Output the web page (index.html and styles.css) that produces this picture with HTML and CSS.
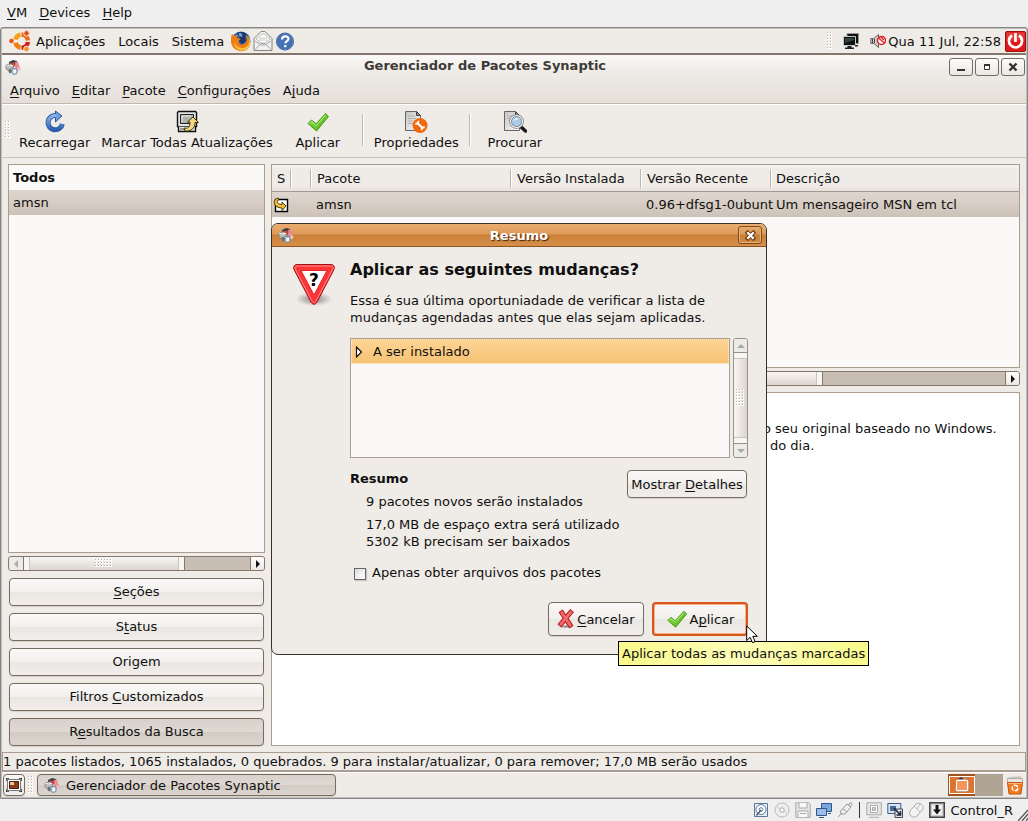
FILE: index.html
```html
<!DOCTYPE html>
<html lang="pt-BR">
<head>
<meta charset="utf-8">
<title>Gerenciador de Pacotes Synaptic</title>
<link rel="stylesheet" href="styles.css">
</head>
<body>
<svg class="defs" aria-hidden="true">
  <defs>
    <linearGradient id="g-blue" x1="0" y1="0" x2="0" y2="1"><stop offset="0" stop-color="#8fb6e8"/><stop offset="1" stop-color="#2a5db0"/></linearGradient>
    <linearGradient id="g-green" x1="0" y1="0" x2="1" y2="1"><stop offset="0" stop-color="#8fe04a"/><stop offset="1" stop-color="#4fb014"/></linearGradient>
    <linearGradient id="g-paper" x1="0" y1="0" x2="1" y2="1"><stop offset="0" stop-color="#c4c4c4"/><stop offset="1" stop-color="#fafafa"/></linearGradient>
    <radialGradient id="g-shadow"><stop offset="0" stop-color="#555" stop-opacity=".7"/><stop offset="1" stop-color="#555" stop-opacity="0"/></radialGradient>
    <pattern id="p-dots" width="3" height="3" patternUnits="userSpaceOnUse"><path d="M0 0h2v2H0z" fill="#fff"/><path d="M0 0h1v1H0z" fill="#b5aea6"/></pattern>
    <symbol id="i-package" viewBox="0 0 16 16">
      <path d="M4 3l4-2 4 1v4l-4 2-4-2z" fill="#3d3f40"/>
      <path d="M10 3l3-.5 1 4 1.500 3.500-3 2-2.500-4z" fill="#e98b93"/>
      <path d="M12 8l3 1 .5 2-2.500 1.500z" fill="#f6c3c8"/>
      <path d="M1 6l5-1.500L8.500 6v5L4 12 1 10z" fill="#b9b9b7" stroke="#77797a" stroke-width=".7"/>
      <path d="M1 6l3.500 1 4-1" fill="none" stroke="#f2f2f2"/>
      <path d="M6 5l2-1.500 3 1-1.500 2.500z" fill="#d9403e"/>
      <path d="M4 10h2l1 3-2 1.500-1.500-1.500z" fill="#6c7178"/>
      <path d="M7 9.500h5v5l-3 1-2-1z" fill="#c4d3e0" stroke="#68809a" stroke-width=".8"/>
      <path d="M8.500 11h2.500v3H8.500z" fill="#f6fafc"/>
    </symbol>
    <symbol id="i-check" viewBox="0 0 24 24">
      <path d="M2 13.500l3.500-3.500 4.500 4L19.500 3.500l3 3L10.500 21z" fill="url(#g-green)" stroke="#4a9a18" stroke-linejoin="round"/>
      <path d="M4 13.200l1.700-1.500 4.400 4L19.600 5" fill="none" stroke="#b8f088"/>
    </symbol>
  </defs>
</svg>

<nav class="host-menu">
  <button><u>V</u>M</button><button><u>D</u>evices</button><button><u>H</u>elp</button>
</nav>

<div class="guest">
  <header class="panel">
    <svg class="ubuntu" viewBox="0 0 22 22"><g fill="none" stroke-width="4.500"><path d="M6.500 9.500A6.500 6.500 0 0 1 11.500 4.800" stroke="#f7a21b"/><path d="M12.500 4.600A6.800 6.800 0 0 1 19 10.500" stroke="#ee6a12"/><path d="M19 12A6.800 6.800 0 0 1 12.500 17.800" stroke="#d32016"/><path d="M11.500 17.700A6.500 6.500 0 0 1 6.500 12.800" stroke="#f08014"/></g><circle cx="2.500" cy="11" r="2.300" fill="#ee5512"/><circle cx="17.500" cy="3.300" r="2.800" fill="#e8500f" stroke="#efebe7"/><circle cx="17.500" cy="19" r="2.800" fill="#f5931c" stroke="#efebe7"/></svg>
    <button>Aplicações</button><button>Locais</button><button>Sistema</button>
    <span class="launchers">
      <svg viewBox="0 0 22 22" width="22" height="22"><circle cx="11" cy="11" r="9.500" fill="#2a66ae"/><path d="M7 3c4-2 8-1 10 2l-2 2 1 4-4 3-3-3 1-3z" fill="#1c3565"/><path d="M9 3c3 0 4 2 3 4L9 6z" fill="#6ea6dc"/><path d="M2 4l2 2c1-1 3-1 4-1L6.500 8 11 9c-2 1-3 2-2 4 2 3 6 1 7-1 2-3 0-6-1-7 4 1 6 6 5 10-2 5-6 7-10 6-6-1-9-5-9-10 0-3 0-5 1-7z" fill="#ef7d12"/><path d="M18 6c3 6 0 12-6 12-4 0-7-3-8-6 0 6 5 8.500 8 8.500 6 0 11-7 6-14.500z" fill="#f9c43c"/></svg>
      <svg viewBox="0 0 22 22" width="22" height="22"><path d="M2 8.500L9 1.500h4l7 7V20.500H2z" fill="#f1f1ef" stroke="#858585"/><path d="M4 9l6-5h2l6 5-5 4H9z" fill="#fff" stroke="#bbb"/><path d="M7 8h8M6.500 10h9" stroke="#c8c8c8"/><path d="M3 19.500l6-6h4l6 6M3 11l6 4h4l6-4" fill="none" stroke="#a5a5a5"/></svg>
      <svg viewBox="0 0 22 22" width="22" height="22"><circle cx="11" cy="11.500" r="8.500" fill="#4472b4" stroke="#a9bcd8"/><circle cx="11" cy="11.500" r="8.500" fill="none" stroke="#2e5593" stroke-width=".8"/><path d="M8 9.500c0-4 6.500-4 6.500-.7 0 2.200-3.200 2.400-3.200 4.500M11.300 15v2.300" fill="none" stroke="#fff" stroke-width="2.200"/></svg>
    </span>
    <span class="spacer"></span>
    <svg class="handle" width="6" height="18"><path d="M0 0h6v18H0z" fill="url(#p-dots)"/></svg>
    <svg class="net" viewBox="0 0 16 18" width="16" height="18"><path d="M4 1.500h11.500v10H4z" fill="#111" stroke="#999"/><path d="M.5 4.500h12v9H.5z" fill="#0c1312" stroke="#c8c8c8"/><path d="M2 6h9v2L2 11z" fill="#344240"/><path d="M4.500 14h4v1.500h2.500V17H2v-1.500h2.500zM12 13h3v1.500h-3z" fill="#222"/></svg>
    <svg class="vol" viewBox="0 0 16 16" width="16" height="16"><path d="M.8 5.500h3L8.500 1.500v13L4 10.500H.8z" fill="#ccc" stroke="#666"/><path d="M2.500 6v4M4.500 6v4" stroke="#444"/><circle cx="11.500" cy="7.500" r="4" fill="#fff" stroke="#dc2028" stroke-width="1.500"/><path d="M8.700 5l5.600 5M11 4l3 3" stroke="#dc2028" stroke-width="1.300"/></svg>
    <time>Qua 11 Jul, 22:58</time>
    <svg class="power" viewBox="0 0 21 21" width="21" height="21"><rect x=".5" y=".5" width="20" height="20" rx="1.500" fill="#df191b" stroke="#9b0d0e"/><path d="M1.500 1.500h18v8h-18z" fill="#ee5c58" opacity=".5"/><path d="M7 4.500a6.500 6.500 0 1 0 7 0" fill="none" stroke="#fff" stroke-width="2.700"/><path d="M10.500 2v9" stroke="#fff" stroke-width="2.700"/></svg>
  </header>

  <main class="window">
    <div class="window-head">
      <div class="titlebar">
        <svg width="16" height="16"><use href="#i-package"/></svg>
        <h1>Gerenciador de Pacotes Synaptic</h1>
        <button aria-label="Minimizar"><svg viewBox="0 0 10 10"><path d="M1 8h8" stroke="#333" stroke-width="2"/></svg></button>
        <button aria-label="Maximizar"><svg viewBox="0 0 10 10"><path d="M2.500 3v4.500h5V3" fill="#fff" stroke="#333"/><path d="M2 3h6" stroke="#333" stroke-width="2"/></svg></button>
        <button aria-label="Fechar"><svg viewBox="0 0 10 10"><path d="M1.500 1.500l7 7M8.500 1.500l-7 7" stroke="#333" stroke-width="2.400"/></svg></button>
      </div>
      <nav class="menubar">
        <button><u>A</u>rquivo</button><button><u>E</u>ditar</button><button><u>P</u>acote</button><button><u>C</u>onfigurações</button><button>A<u>j</u>uda</button>
      </nav>
    </div>

    <div class="toolbar">
      <svg class="handle" width="6" height="18"><path d="M0 0h6v18H0z" fill="url(#p-dots)"/></svg>
      <button>
        <svg viewBox="0 0 24 24"><path d="M19.300 14A7.200 7.200 0 1 1 13 5.500" fill="none" stroke="#2b58a2" stroke-width="5"/><path d="M12.500 1l6.500 5-6.500 6z" fill="#6f9edc" stroke="#2b58a2"/><path d="M19.300 14A7.200 7.200 0 1 1 13 5.700" fill="none" stroke="url(#g-blue)" stroke-width="3.200"/></svg>
        Recarregar</button>
      <button>
        <svg viewBox="0 0 24 24"><path d="M2.500 2.500l1-1h17l1 1v14h-1v5h-17v-5h-1z" fill="#e4e4e2" stroke="#111" stroke-width="1.400"/><path d="M5.500 4.500h13v9h-13z" fill="#aeb1ae" stroke="#222"/><path d="M7 12V6h9" stroke="#eee" fill="none"/><path d="M3 16.500h12M5 19h9" stroke="#555"/><path d="M9 18c4 1 6-1 6-6h-2.500L18 7l5.500 5.500H20c0 6-4 9-10 8.500z" fill="#f5d77d" stroke="#3e3110"/></svg>
        Marcar Todas Atualizações</button>
      <button><svg><use href="#i-check"/></svg>Aplicar</button>
      <i class="sep"></i>
      <button>
        <svg viewBox="0 0 24 24"><path d="M1.500 1.500h11l4 4v15h-15z" fill="url(#g-paper)" stroke="#666"/><path d="M12.500 1.500l4 4h-4z" fill="#888" stroke="#444"/><path d="M4 6h7M4 8.500h8M4 11h5M4 13.500h5" stroke="#b2b2b2"/><circle cx="16" cy="15.500" r="7.500" fill="#f06a0c"/><path d="M13 12.500l6 6" stroke="#fff" stroke-width="2.200"/><path d="M11.300 13.700a2.500 2.500 0 0 0 3-3M20.700 17.300a2.500 2.500 0 0 0-3 3" fill="none" stroke="#fff" stroke-width="1.800"/></svg>
        Propriedades</button>
      <i class="sep"></i>
      <button>
        <svg viewBox="0 0 24 24"><path d="M1.500 1.500h11l4 4v15h-15z" fill="url(#g-paper)" stroke="#666"/><path d="M12.500 1.500l4 4h-4z" fill="#888" stroke="#444"/><path d="M4 6h6M4 8.500h3" stroke="#b2b2b2"/><path d="M17.500 16.500l5 4.500" stroke="#1b1b1b" stroke-width="3.500" stroke-linecap="round"/><circle cx="13.500" cy="11.500" r="6" fill="#a9cbe8" stroke="#777" stroke-width="2.600"/><circle cx="13.500" cy="11.500" r="6" fill="none" stroke="#f0f0f0" stroke-width="1.200"/><path d="M10 11c1-3 4-4 6-2z" fill="#dcecf8"/></svg>
        Procurar</button>
    </div>

    <div class="content">
      <aside class="side">
        <ul class="list"><li><b>Todos</b></li><li class="selected">amsn</li></ul>
        <div class="hscroll">
          <button class="off" aria-label="Rolar para a esquerda"><svg viewBox="0 0 6 8"><path d="M5 0v8L1 4z" fill="#aaa"/></svg></button>
          <div class="thumb"><svg width="18" height="9"><path d="M0 0h18v9H0z" fill="url(#p-dots)"/></svg></div>
          <div class="trough"></div>
          <button aria-label="Rolar para a direita"><svg viewBox="0 0 6 8"><path d="M1 0v8l4-4z" fill="#111"/></svg></button>
        </div>
        <div class="filters">
          <button class="btn"><u>S</u>eções</button>
          <button class="btn">S<u>t</u>atus</button>
          <button class="btn">Origem</button>
          <button class="btn">Filtros <u>C</u>ustomizados</button>
          <button class="btn pressed">R<u>e</u>sultados da Busca</button>
        </div>
      </aside>

      <section class="main">
        <div class="table-box">
          <table>
            <colgroup><col class="c-s"><col class="c-icon"><col class="c-name"><col class="c-ver"><col class="c-ver"><col></colgroup>
            <thead><tr><th>S</th><th></th><th>Pacote</th><th>Versão Instalada</th><th>Versão Recente</th><th>Descrição</th></tr></thead>
            <tbody><tr>
              <td><svg class="mark" viewBox="0 0 16 16" width="16" height="16"><path d="M2.500 2.500h12v12h-12z" fill="#fff" stroke="#000" stroke-width="1.400"/><path d="M5 1C1 2 0 6 3 9c2 1.500 4 2 6 2v2.500l4-4.500-4-4v2.500C6 7.500 4 6 4.500 4L6 2z" fill="#f0bb32" stroke="#4b3705"/></svg></td>
              <td></td><td>amsn</td><td></td><td>0.96+dfsg1-0ubunt</td><td>Um mensageiro MSN em tcl</td>
            </tr></tbody>
          </table>
        </div>
        <div class="hscroll">
          <div class="thumb wide"></div>
          <div class="trough"></div>
          <button aria-label="Rolar para a direita"><svg viewBox="0 0 6 8"><path d="M1 0v8l4-4z" fill="#111"/></svg></button>
        </div>
        <div class="description"><p>o seu original baseado no Windows.</p><p class="second">do dia.</p></div>
      </section>
    </div>
    <footer class="status">1 pacotes listados, 1065 instalados, 0 quebrados. 9 para instalar/atualizar, 0 para remover; 17,0 MB serão usados</footer>
  </main>

  <footer class="taskbar">
    <button class="btn desktop" aria-label="Mostrar a área de trabalho"><svg viewBox="0 0 16 14" width="16" height="14"><path d="M1.500 1.500h13v11h-13z" fill="#fff" stroke="#777"/><path d="M3.500 3.500h9v7h-9z" fill="#8a3d12" stroke="#402010"/><path d="M4 4h4v3H4z" fill="#f5c09a"/><path d="M0 3V0h3M13 0h3v3M0 11v3h3M13 14h3v-3" fill="none" stroke="#222" stroke-width="1.500"/></svg></button>
    <svg class="handle" width="6" height="18"><path d="M0 0h6v18H0z" fill="url(#p-dots)"/></svg>
    <button class="btn pressed task"><svg width="16" height="16"><use href="#i-package"/></svg>Gerenciador de Pacotes Synaptic</button>
    <span class="spacer"></span>
    <svg class="pager" viewBox="0 0 55 22" width="55" height="22"><path d="M0 0h55v22H0z" fill="#b0a494"/><path d="M0 0h27v22H0z" fill="#a35320"/><path d="M1.500 2.500h25v17h-25z" fill="#dc7430" stroke="#fff"/><path d="M9 6l4-3 4 1 4 4v8l-3 2H9l-2-3z" fill="#b9a39b"/><path d="M10 5l3-2 3 2z" fill="#333"/><path d="M8.500 6.500h11v10h-11z" fill="#f6965a" stroke="#fff"/></svg>
    <svg viewBox="0 0 18 20" width="18" height="20"><path d="M3 2l12-1v4H2z" fill="#c9c9c6"/><path d="M1.500 3.500h15v4h-15z" fill="#e8e6e2" stroke="#b4aca4"/><path d="M1.500 7.500h15l-1.500 11.500H3z" fill="#ef7a20" stroke="#c4550c"/><path d="M2 8.500h14" stroke="#fbb27a"/><circle cx="9" cy="13" r="2.800" fill="none" stroke="#fff" stroke-width="1.600" stroke-dasharray="4.500 1.300"/></svg>
  </footer>

  <section class="dialog" role="dialog" aria-labelledby="dlg-title">
    <div class="dialog-title">
      <svg width="16" height="16"><use href="#i-package"/></svg>
      <h2 id="dlg-title">Resumo</h2>
      <button aria-label="Fechar"><svg viewBox="0 0 12 12"><path d="M3 3l6 6M9 3l-6 6" stroke="#6b3a10" stroke-width="4.500" stroke-linecap="square"/><path d="M2.500 2.500l7 7M9.500 2.500l-7 7" stroke="#fff" stroke-width="2.500"/></svg></button>
    </div>
    <div class="dialog-body">
      <svg class="warn" viewBox="0 0 44 46" width="44" height="46"><ellipse cx="22" cy="37" rx="18" ry="7" fill="url(#g-shadow)"/><path d="M5 2.500h34c3 0 4 3 3 5L25 40c-1.500 3-4.500 3-6 0L2 7.500c-1-2 0-5 3-5z" fill="#fb3438" stroke="#a80f14"/><path d="M5 4h34c2 0 2.500 2 1.500 3.500L24 39c-1 2-3 2-4 0L3.500 7.500C2.500 6 3 4 5 4z" fill="none" stroke="#ff8c8c"/><path d="M9 8.500h26L22 33z" fill="#fff" stroke="#e22"/><text x="22" y="24" text-anchor="middle" class="q">?</text></svg>
      <div class="dialog-main">
        <h3>Aplicar as seguintes mudanças?</h3>
        <p class="intro">Essa é sua última oportuniadade de verificar a lista de<br>mudanças agendadas antes que elas sejam aplicadas.</p>
        <div class="tree-row">
          <div class="tree"><div class="tree-item"><svg viewBox="0 0 8 12" width="8" height="12"><path d="M1.500 1v10l5-5z" fill="#fff" stroke="#111" stroke-width="1.200"/></svg>A ser instalado</div></div>
          <div class="vscroll">
            <button class="off" aria-label="Rolar para cima"><svg viewBox="0 0 8 6"><path d="M0 5h8L4 1z" fill="#aaa"/></svg></button>
            <div class="vthumb"><svg width="9" height="18"><path d="M0 0h9v18H0z" fill="url(#p-dots)"/></svg></div>
            <button class="off" aria-label="Rolar para baixo"><svg viewBox="0 0 8 6"><path d="M0 1h8L4 5z" fill="#aaa"/></svg></button>
          </div>
        </div>
        <div class="summary">
          <div><h4>Resumo</h4><p>9 pacotes novos serão instalados</p><p>17,0 MB de espaço extra será utilizado<br>5302 kB precisam ser baixados</p></div>
          <button class="btn">Mostrar <u>D</u>etalhes</button>
        </div>
        <label class="only"><input type="checkbox">Apenas obter arquivos dos pacotes</label>
        <div class="actions">
          <button class="btn"><svg viewBox="0 0 18 20" width="18" height="20"><ellipse cx="9" cy="17.500" rx="8" ry="2" fill="url(#g-shadow)"/><path d="M5 4l8 12M13.500 3.500L4 15" stroke="#b81c20" stroke-width="5" stroke-linecap="square"/><path d="M5 4l8 12M13.500 3.500L4 15" stroke="#f16a6a" stroke-width="3" stroke-linecap="square"/></svg><span><u>C</u>ancelar</span></button>
          <button class="btn default"><svg width="22" height="22"><use href="#i-check"/></svg><span>A<u>p</u>licar</span></button>
        </div>
      </div>
    </div>
  </section>
  <div class="tooltip" role="tooltip">Aplicar todas as mudanças marcadas</div>
  <svg class="cursor" viewBox="0 0 12 19" width="12" height="19"><path d="M.7 1v14.500l3.400-3.200 2.400 5.400 2.600-1.100-2.300-5.300h4.500z" fill="#fff" stroke="#000"/></svg>
</div>

<footer class="host-status">
  <svg viewBox="0 0 16 16"><path d="M1.500 1.500h13v13h-13z" fill="#e8eef5" stroke="#59779b"/><circle cx="8" cy="7.500" r="5" fill="#fff" stroke="#59779b"/><circle cx="8" cy="7.500" r="1.800" fill="none" stroke="#59779b"/><path d="M3.500 13.500L8 8" stroke="#456" stroke-width="1.300"/></svg>
  <svg viewBox="0 0 16 16"><circle cx="8" cy="8" r="7" fill="#eee" stroke="#bbb"/><circle cx="8" cy="8" r="2.200" fill="#fff" stroke="#aaa"/><path d="M3 5l3 2M10 9l3 2" stroke="#ccc"/></svg>
  <svg viewBox="0 0 16 16"><path d="M.8.8h13l1.500 1.500v13H.8z" fill="#e6e6e6" stroke="#aaa"/><path d="M4 1v5h8V1M3 15V9h10v6M5 11.500h6" fill="#f8f8f8" stroke="#aaa"/></svg>
  <svg viewBox="0 0 16 16"><path d="M5.500 1.500h10v8h-10z" fill="#7ba4dc" stroke="#2f568f"/><path d="M.5 6.500h10v7H.5z" fill="#9dbde8" stroke="#2f568f"/><path d="M3 15.500h5M12 11.500h3" stroke="#2f568f"/></svg>
  <svg viewBox="0 0 16 16"><path d="M1 15l3-3M4 12l-.5-3L10 2l4 3-6 7z" fill="#eee" stroke="#999"/><path d="M11 3l3-2.500 1 2-2 2M6 7l4 3" fill="none" stroke="#999"/></svg>
  <i class="bar"></i>
  <svg viewBox="0 0 16 16"><path d="M.8.8h14.500v12H.8zM3 15.300h10" fill="#e5e5e5" stroke="#aaa"/><path d="M4.500 3.500h7v7h-7z" fill="#fff" stroke="#aaa"/><path d="M6.500 5.500h3v3h-3z" fill="#ccc" stroke="#aaa"/></svg>
  <svg viewBox="0 0 16 16"><path d="M.8 1.500h13v10H.8z" fill="#d8e4f2" stroke="#3c5a80"/><path d="M3 4h6v5H3z" fill="#4c6c98"/><path d="M8 7h7.500v8.500H8z" fill="#dfe3ea" stroke="#445"/><path d="M7 6l6 6.500M13.500 9v4h-4" fill="none" stroke="#223" stroke-width="1.500"/></svg>
  <svg viewBox="0 0 16 16"><path d="M2 9l6-7c3-2 8 1 7 5l-6 7c-4 3-9-1-7-5z" fill="#f4f4f4" stroke="#aaa"/><path d="M6 4l6 6M9 7l3-5" stroke="#bbb" fill="none"/></svg>
  <svg viewBox="0 0 16 16"><path d="M.8.800h14.500v14.500H.8z" fill="#ccc" stroke="#444" stroke-width="1.500"/><path d="M3 3h10v10H3z" fill="#f0f0f0"/><path d="M8 3v5" stroke="#111" stroke-width="3"/><path d="M4 7.500h8L8 12.500z" fill="#111"/></svg>
  <span>Control_R</span>
  <svg class="resize" viewBox="0 0 10 12"><path d="M0 12L10 1M4 12l6-7M8 12l2-3" stroke="#555" stroke-width="1.300"/></svg>
</footer>
</body>
</html>
```
FILE: styles.css
```css
* { box-sizing: border-box; }
body {
  margin: 0;
  height: 100vh;
  display: flex;
  flex-direction: column;
  overflow: hidden;
  background: #efefef;
  color: #101010;
  font: 13px/17px "DejaVu Sans", sans-serif;
}
.defs { position: absolute; width: 0; height: 0; }
h1, h2, h3, h4, p, ul { margin: 0; padding: 0; font-size: 13px; }
ul { list-style: none; }
svg { flex: none; display: block; }
button { margin: 0; padding: 0; border: 0; background: none; font: inherit; color: inherit; white-space: nowrap; }
u { text-underline-offset: 2px; text-decoration-skip-ink: none; }
.spacer { flex: 1; }

.host-menu { flex: none; display: flex; gap: 12px; height: 27px; padding: 0 7px; }
.host-menu button { padding-bottom: 2px; }

.guest {
  position: relative;
  flex: 1;
  min-height: 0;
  display: flex;
  flex-direction: column;
  padding: 1px;
  border: 1px solid #868686;
  border-radius: 3px 3px 0 0;
  background: #c2bfbb;
}

.panel {
  flex: none;
  display: flex;
  align-items: center;
  height: 26px;
  padding-left: 7px;
  background: #efebe7;
  border-bottom: 2px solid #84766a;
}
.ubuntu { width: 22px; height: 22px; margin-right: 5px; }
.panel button { margin-right: 13px; }
.launchers { display: flex; margin-left: -7px; }
.panel .handle { margin-right: 10px; }
.net { margin-right: 11px; }
.vol { margin-right: 2px; }
.power { margin-left: 4px; }

.window { flex: 1; min-height: 0; display: flex; flex-direction: column; background: #efebe7; }
.window-head {
  flex: none;
  height: 49px;
  border-bottom: 1px solid #c4b8ac;
  background: linear-gradient(#fbfaf8, #efebe7 16px, #ece8e4 24px, #e5dfd9);
}
.titlebar { display: flex; align-items: center; gap: 2px; height: 23px; padding: 0 1px 0 3px; }
.titlebar h1 { flex: 1; padding-bottom: 2px; text-align: center; color: #3c3b37; }
.titlebar button {
  display: grid;
  place-items: center;
  width: 24px;
  height: 18px;
  border: 1px solid #6f6d69;
  border-radius: 3px;
  background: linear-gradient(#fdfcfb, #ebe7e3);
}
.titlebar button svg { width: 10px; height: 10px; }
.menubar { display: flex; align-items: center; gap: 12px; height: 25px; padding: 0 8px; }

.toolbar {
  flex: none;
  display: flex;
  align-items: center;
  gap: 11px;
  height: 54px;
  padding: 0 0 2px 3px;
  border-top: 1px solid #fff;
  border-bottom: 1px solid #c8c4be;
}
.toolbar .handle { margin-right: -3px; }
.toolbar button { display: flex; flex-direction: column; align-items: center; min-width: 68px; }
.toolbar button svg { width: 24px; height: 24px; }
.sep { width: 2px; height: 32px; margin: 0 -1px; border-left: 1px solid #bdb8b2; border-right: 1px solid #fff; }

.content { flex: 1; min-height: 0; display: flex; gap: 6px; padding: 6px; }
.side { flex: none; width: 257px; display: flex; flex-direction: column; }
.list { flex: 1; border: 1px solid #aa9c8f; background: #faf9f8; }
.list li { height: 25px; padding: 4px; }
.selected { background: linear-gradient(#dfd7cf, #cdc2b8); }

.hscroll { flex: none; display: flex; height: 15px; margin-top: 3px; border: 1px solid #85786b; border-radius: 3px; background: #c9beb4; overflow: hidden; }
.hscroll button, .vscroll button { flex: none; display: grid; place-items: center; width: 14px; background: linear-gradient(#fff, #ebe6e2); }
.hscroll button { border-left: 1px solid #85786b; }
.hscroll .off { border-left: 0; }
.hscroll button svg { width: 6px; height: 8px; }
.hscroll .off, .vscroll .off { background: #ebebe8; }
.thumb { width: 162px; display: grid; place-items: center; border: 1px solid #85786b; border-width: 0 1px; background: linear-gradient(90deg, #f8f6f4 5px, #c9c4be 5px 6px, transparent 6px calc(100% - 6px), #c9c4be calc(100% - 6px) calc(100% - 5px), #f8f6f4 calc(100% - 5px)), linear-gradient(#f8f6f4, #dcd5cf); }
.thumb.wide { width: 551px; border-left: 0; }
.trough { flex: 1; }

.btn {
  height: 28px;
  border: 1px solid #766b5f;
  border-radius: 4px;
  background: linear-gradient(#faf9f8, #f2f0ed 50%, #eae6e2 51%, #f1eeeb);
  box-shadow: 0 1px 1px #d6d1cb;
}
.pressed { background: linear-gradient(#d8d1ca, #dfd9d4 50%, #d3cbc4 51%, #dcd5cf); }
.filters { display: flex; flex-direction: column; gap: 7px; padding: 7px 1px 0; }
.filters .btn { padding-bottom: 2px; }

.main { flex: 1; min-width: 0; display: flex; flex-direction: column; }
.table-box { flex: none; height: 204px; border: 1px solid #aa9c8f; background: #faf9f8; overflow: hidden; }
table { width: 100%; table-layout: fixed; border-collapse: separate; border-spacing: 0; }
.c-s, .c-icon { width: 20px; }
.c-name { width: 200px; }
.c-ver { width: 130px; }
th, td { padding: 0 0 0 5px; white-space: nowrap; text-align: left; font-weight: normal; }
thead tr { background: linear-gradient(#f5f3f1, #efebe7 4px, #efebe7 21px, #e2deda); }
th { height: 27px; border-bottom: 1px solid #a79b8f; background: linear-gradient(90deg, #bbb5af 1px, #fff 1px) right 4px / 2px 19px no-repeat; }
th:last-child { background: none; }
td { height: 25px; }
tbody tr { background: linear-gradient(#dfd7cf, #cdc2b8); }
td:first-child { padding-left: 1px; }
td:nth-child(3), td:nth-child(5), td:last-child, th:last-child { padding-left: 4px; }
.description { flex: 1; margin-top: 6px; padding: 27px 0 0 491px; border: 1px solid #aa9c8f; background: #fff; overflow: hidden; white-space: nowrap; }
.description .second { padding-left: 7px; }

.status { flex: none; height: 20px; border: 1px solid #aa9c8f; border-bottom-width: 2px; white-space: nowrap; }

.taskbar { flex: none; display: flex; align-items: center; gap: 3px; height: 25px; padding: 0 2px 0 1px; border-top: 1px solid #fff; background: #efebe7; }
.taskbar .btn { height: 22px; }
.desktop { width: 22px; display: grid; place-items: center; }
.task { display: flex; align-items: center; gap: 6px; width: 299px; padding-left: 6px; }

.dialog {
  position: absolute;
  left: 270px;
  top: 195px;
  width: 496px;
  border: 1px solid #35302b;
  border-radius: 7px;
  background: #efebe7;
  overflow: hidden;
}
.dialog-title { display: flex; align-items: center; height: 23px; padding: 0 4px 0 6px; border-bottom: 1px solid #8a5522; background: linear-gradient(#e9ae70, #de9a58 10px, #c97f38 11px, #d6904a); }
.dialog-title h2 { flex: 1; padding-left: 6px; text-align: center; color: #fff; text-shadow: 1px 1px 1px #3a2410; }
.dialog-title button { display: grid; place-items: center; width: 24px; height: 18px; border: 1px solid #7c4a1c; border-radius: 3px; box-shadow: inset 0 0 0 1px #e8b17a; }
.dialog-title button svg { width: 11px; height: 11px; }
.dialog-body { display: flex; gap: 14px; padding: 12px 18px 18px 20px; }
.warn { margin-top: 3px; }
.q { font: bold 17px "DejaVu Sans", sans-serif; }
.dialog-main { flex: 1; min-width: 0; }
.dialog-main h3 { font-size: 16px; line-height: 22px; }
.intro { margin: 11px 0 12px; white-space: nowrap; }
.tree-row { display: flex; gap: 3px; height: 120px; }
.tree { flex: 1; border: 1px solid #aa9c8f; background: #faf9f8; }
.tree-item { display: flex; align-items: center; gap: 10px; height: 25px; padding-left: 3px; border: 1px dotted #fff3dc; background: linear-gradient(#fdd394, #f7c374); }
.vscroll { width: 15px; display: flex; flex-direction: column; border: 1px solid #9c9084; border-radius: 3px; overflow: hidden; }
.vscroll button { width: auto; height: 13px; }
.vscroll button svg { width: 8px; height: 6px; }
.vthumb { flex: 1; display: grid; place-items: center; border: 1px solid #9c9084; border-width: 1px 0; background: linear-gradient(#f8f6f4 5px, #c9c4be 5px 6px, transparent 6px calc(100% - 6px), #c9c4be calc(100% - 6px) calc(100% - 5px), #f8f6f4 calc(100% - 5px)), linear-gradient(90deg, #f8f6f4, #dcd5cf); }
.summary { display: flex; justify-content: space-between; align-items: flex-start; padding: 12px 1px 0 0; }
.summary p { margin: 6px 0 0 16px; }
.summary .btn { width: 120px; }
.only { display: flex; align-items: center; gap: 6px; margin: 14px 0 21px 4px; }
.only input { appearance: none; width: 12px; height: 12px; margin: 2px 0 0; border: 1px solid #666; background: linear-gradient(135deg, #ddd, #fff); box-shadow: 1px 1px 1px #c8c4c0; }
.actions { display: flex; justify-content: flex-end; gap: 8px; }
.actions .btn { display: flex; align-items: center; justify-content: center; gap: 2px; width: 96px; height: 34px; }
.actions .default { border: 2px solid #d4571c; box-shadow: inset 0 0 0 1px #fbae84; }
.tooltip { position: absolute; left: 617px; top: 613px; padding: 3px; border: 1px solid #000; background: linear-gradient(90deg, #f9f98c, #fdfdb8 50%, #f9f98c); white-space: nowrap; }
.cursor { position: absolute; left: 745px; top: 597px; }

.host-status { flex: none; display: flex; align-items: center; justify-content: flex-end; gap: 5px; height: 22px; padding-left: 12px; }
.host-status svg { width: 16px; height: 16px; }
.bar { width: 1px; height: 16px; margin: 0 1px; background: #333; }
.host-status .resize { align-self: flex-end; width: 10px; height: 12px; }
```
